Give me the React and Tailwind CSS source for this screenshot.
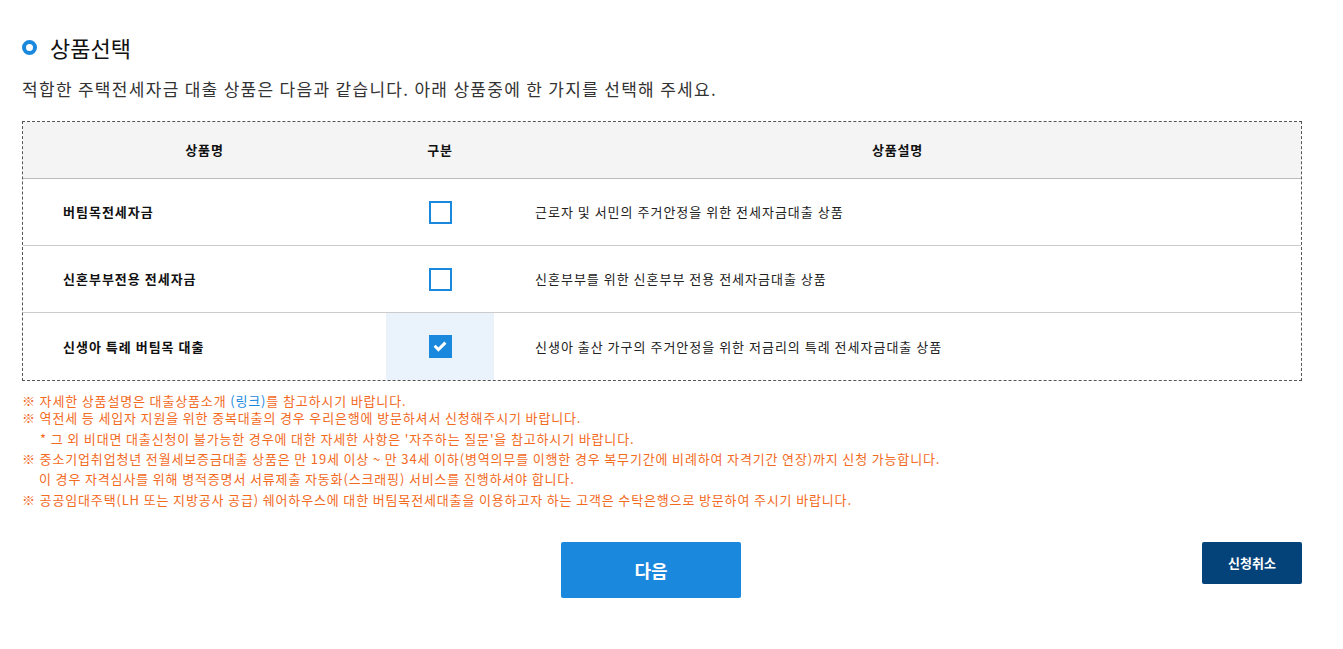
import React from "react";

const FONT = { fontFamily: '"Noto Sans CJK KR", "Noto Sans", sans-serif' };

const products = [
  { name: "버팀목전세자금", desc: "근로자 및 서민의 주거안정을 위한 전세자금대출 상품", checked: false },
  { name: "신혼부부전용 전세자금", desc: "신혼부부를 위한 신혼부부 전용 전세자금대출 상품", checked: false },
  { name: "신생아 특례 버팀목 대출", desc: "신생아 출산 가구의 주거안정을 위한 저금리의 특례 전세자금대출 상품", checked: true },
];

const Check = ({ on }) =>
  on ? (
    <span className="flex h-[23px] w-[23px] items-center justify-center bg-[#1a88dd]">
      <svg width="14" height="11" viewBox="0 0 14 11">
        <path d="M1.6 4.8 L5.4 8.6 L12.4 1.6" stroke="#fff" strokeWidth="3" fill="none" />
      </svg>
    </span>
  ) : (
    <span className="block h-[23px] w-[23px] border-2 border-[#1a88dd] bg-white" />
  );

export default function App() {
  return (
    <div className="min-h-[649px] bg-white pl-[22px] pt-[34px] text-[#222]" style={FONT}>
      <div className="w-[1280px]">
        <div className="flex items-center gap-[13px]">
          <span className="block h-[15px] w-[15px] rounded-full border-[4px] border-[#1a88dd]" />
          <h2 className="text-[22px] leading-[26px] text-[#111]">상품선택</h2>
        </div>

        <p className="mt-[17px] text-[17px] leading-[24px] tracking-[1.3px] text-[#333]">
          적합한 주택전세자금 대출 상품은 다음과 같습니다. 아래 상품중에 한 가지를 선택해 주세요.
        </p>

        <div className="mt-[20px] border border-dashed border-[#555]">
          <div className="grid h-[57px] grid-cols-[363px_108px_1fr] items-center border-b border-[#bbb] bg-[#f4f4f4] text-[13px] font-bold tracking-[0.8px] text-[#111]">
            <div className="text-center">상품명</div>
            <div className="text-center">구분</div>
            <div className="text-center">상품설명</div>
          </div>
          {products.map((p, i) => (
            <div
              key={i}
              className={`grid h-[67px] grid-cols-[363px_108px_1fr] text-[13px] tracking-[1px] ${
                i < products.length - 1 ? "border-b border-[#ccc]" : ""
              }`}
            >
              <div className="flex items-center pl-[40px] font-bold text-[#111]">{p.name}</div>
              <div className={`flex items-center justify-center ${p.checked ? "bg-[#eaf3fb]" : ""}`}>
                <Check on={p.checked} />
              </div>
              <div className="flex items-center pl-[41px] text-[#222]">{p.desc}</div>
            </div>
          ))}
        </div>

        <div className="mt-[11px] text-[13px] tracking-[0.85px] text-[#f26a1e]">
          <p className="leading-[17px]">
            ※ 자세한 상품설명은 대출상품소개 <span className="text-[#1a88dd]">(링크)</span>를 참고하시기 바랍니다.
          </p>
          <p className="leading-[17px]">※ 역전세 등 세입자 지원을 위한 중복대출의 경우 우리은행에 방문하셔서 신청해주시기 바랍니다.</p>
          <p className="mt-[3px] pl-[18px] leading-[20px]">
            * 그 외 비대면 대출신청이 불가능한 경우에 대한 자세한 사항은 '자주하는 질문'을 참고하시기 바랍니다.
          </p>
          <p className="leading-[20px]">
            ※ 중소기업취업청년 전월세보증금대출 상품은 만 19세 이상 ~ 만 34세 이하(병역의무를 이행한 경우 복무기간에 비례하여 자격기간 연장)까지 신청 가능합니다.
          </p>
          <p className="pl-[17px] leading-[20px]">
            이 경우 자격심사를 위해 병적증명서 서류제출 자동화(스크래핑) 서비스를 진행하셔야 합니다.
          </p>
          <p className="leading-[21px]">
            ※ 공공임대주택(LH 또는 지방공사 공급) 쉐어하우스에 대한 버팀목전세대출을 이용하고자 하는 고객은 수탁은행으로 방문하여 주시기 바랍니다.
          </p>
        </div>

        <div className="mt-[32px] flex items-start">
          <button className="ml-[539px] h-[56px] w-[180px] rounded-[2px] bg-[#1a88dd] text-[18px] font-bold text-white">
            다음
          </button>
          <button className="ml-auto h-[42px] w-[100px] rounded-[2px] bg-[#04427a] text-[13px] font-bold text-white">
            신청취소
          </button>
        </div>
      </div>
    </div>
  );
}
